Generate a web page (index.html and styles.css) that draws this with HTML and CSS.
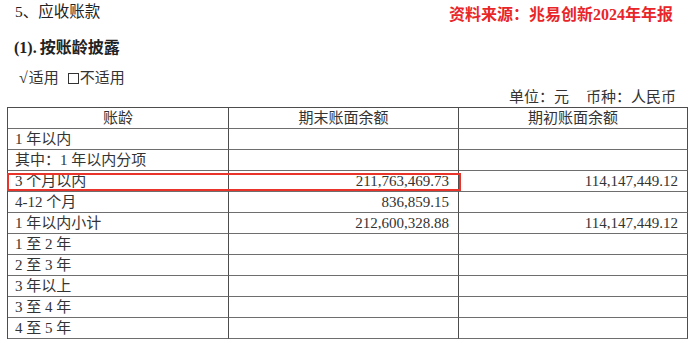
FILE: index.html
```html
<!DOCTYPE html>
<html lang="zh-CN">
<head>
<meta charset="utf-8">
<title>应收账款</title>
<link rel="stylesheet" href="styles.css">
</head>
<body>
<div class="top">
  <div class="title">5、应收账款</div>
  <div class="source">资料来源：兆易创新2024年年报</div>
</div>
<div class="subtitle">(1).&thinsp;按账龄披露</div>
<div class="check"><span class="mark">√</span>适用<span class="box"></span>不适用</div>
<div class="unit"><span>单位：元</span><span>币种：人民币</span></div>
<div class="sheet">
  <div class="grid">
    <div class="cell head">账龄</div>
    <div class="cell head">期末账面余额</div>
    <div class="cell head">期初账面余额</div>

    <div class="cell">1 年以内</div>
    <div class="cell num"></div>
    <div class="cell num"></div>

    <div class="cell">其中：1 年以内分项</div>
    <div class="cell num"></div>
    <div class="cell num"></div>

    <div class="cell">3 个月以内</div>
    <div class="cell num">211,763,469.73</div>
    <div class="cell num">114,147,449.12</div>

    <div class="cell">4-12 个月</div>
    <div class="cell num">836,859.15</div>
    <div class="cell num"></div>

    <div class="cell">1 年以内小计</div>
    <div class="cell num">212,600,328.88</div>
    <div class="cell num">114,147,449.12</div>

    <div class="cell">1 至 2 年</div>
    <div class="cell num"></div>
    <div class="cell num"></div>

    <div class="cell">2 至 3 年</div>
    <div class="cell num"></div>
    <div class="cell num"></div>

    <div class="cell">3 年以上</div>
    <div class="cell num"></div>
    <div class="cell num"></div>

    <div class="cell">3 至 4 年</div>
    <div class="cell num"></div>
    <div class="cell num"></div>

    <div class="cell">4 至 5 年</div>
    <div class="cell num"></div>
    <div class="cell num"></div>
  </div>
  <div class="highlight"></div>
</div>
</body>
</html>
```
FILE: styles.css
```css
html, body {
  margin: 0;
  padding: 0;
  background: #ffffff;
}
body {
  font-family: "Liberation Serif", "Noto Sans CJK SC", serif;
  color: #2a2a2a;
  width: 692px;
  height: 343px;
  overflow: hidden;
}
.top {
  display: flex;
  justify-content: space-between;
  align-items: flex-start;
  height: 30px;
}
.title {
  padding-left: 15px;
  font-size: 15.5px;
  line-height: 24px;
  color: #222;
}
.source {
  padding-right: 19px;
  font-size: 16px;
  line-height: 29px;
  color: #e8262a;
  font-weight: bold;
}
.subtitle {
  padding-left: 14px;
  font-size: 16px;
  font-weight: bold;
  line-height: 36px;
  height: 36px;
  color: #222;
}
.check {
  padding-left: 19px;
  font-size: 15px;
  line-height: 23px;
  height: 23px;
  color: #333;
}
.check .mark {
  font-size: 16px;
  margin-right: 1px;
}
.check .box {
  display: inline-block;
  width: 9px;
  height: 9px;
  border: 1px solid #333;
  margin-left: 9px;
  margin-right: 1px;
  vertical-align: -1px;
}
.unit {
  display: flex;
  justify-content: flex-end;
  gap: 17px;
  padding-right: 16px;
  font-size: 15px;
  line-height: 17px;
  height: 18px;
  color: #333;
}
.sheet {
  position: relative;
  margin-left: 7px;
  width: 681px;
}
.grid {
  display: grid;
  grid-template-columns: 221px 230px 229px;
  border-top: 1px solid #4d4d4d;
  border-left: 1px solid #4d4d4d;
}
.cell {
  box-sizing: border-box;
  height: 21px;
  border-right: 1px solid #4d4d4d;
  border-bottom: 1px solid #6e6e6e;
  font-size: 15px;
  line-height: 20px;
  padding-left: 7px;
  white-space: nowrap;
  color: #333;
}
.head {
  text-align: center;
  padding-left: 0;
}
.num {
  text-align: right;
  padding-left: 0;
  padding-right: 9px;
}
.highlight {
  position: absolute;
  left: 0;
  top: 66px;
  width: 454px;
  height: 18px;
  box-sizing: border-box;
  border: 2px solid #e8342a;
}
```
